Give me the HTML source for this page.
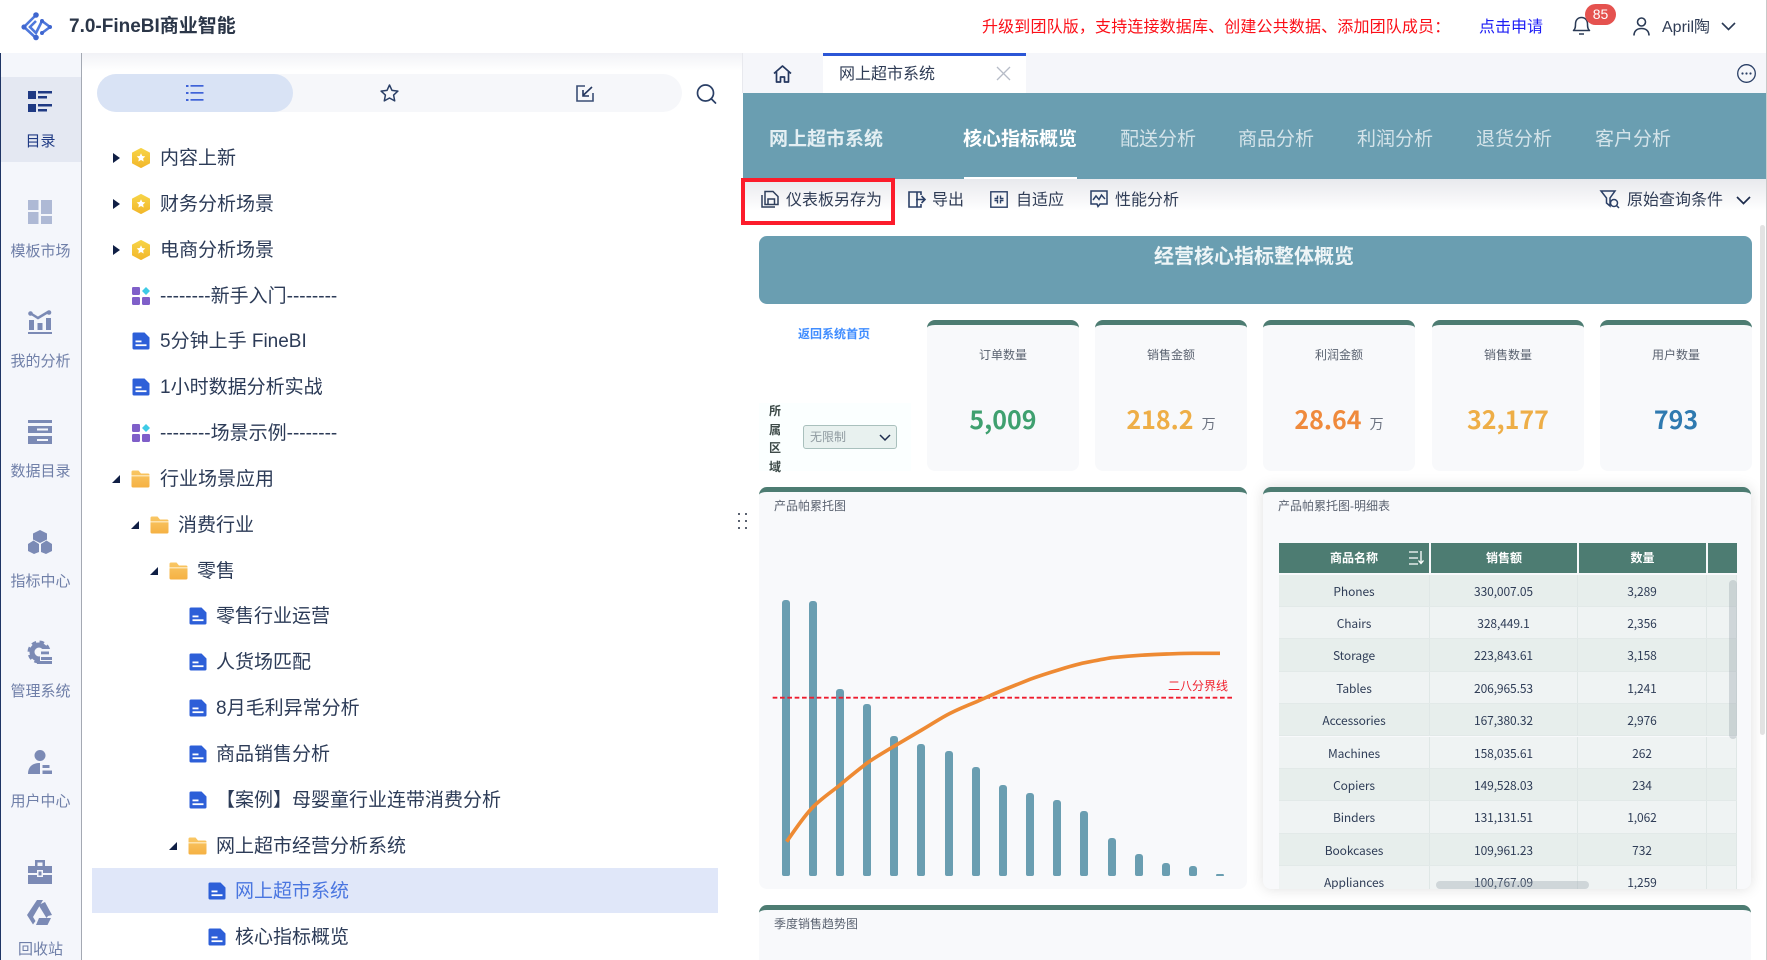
<!DOCTYPE html>
<html lang="zh">
<head>
<meta charset="utf-8">
<title>FineBI</title>
<style>
html,body{margin:0;padding:0;width:1767px;height:960px;overflow:hidden;background:#fff;font-family:"Liberation Sans","Noto Sans CJK SC",sans-serif;color:#2a3a55}
#w{position:relative;width:1767px;height:960px;overflow:hidden}
.a{position:absolute}
.t{position:absolute;white-space:nowrap}
svg{position:absolute;overflow:visible}
.rail{position:absolute;left:0;width:81px;text-align:center;font-size:15px;line-height:20px;color:#6f7fa8;white-space:nowrap;transform:translateY(1px)}
.row{position:absolute;height:28px;line-height:28px;font-size:19px;color:#2c3b57;white-space:nowrap;transform:translateY(1px)}
.nav{position:absolute;top:126px;line-height:28px;font-size:19px;color:#d5e4ea;white-space:nowrap}
.tb{position:absolute;top:189px;line-height:24px;font-size:16px;color:#2f3c55;white-space:nowrap}
.card{position:absolute;background:#f8f9fb;border-radius:8px;border-top:5px solid #4d7c72;box-sizing:border-box}
.kt{position:absolute;left:0;right:0;top:21px;text-align:center;font-size:12px;line-height:18px;color:#5a6270}
.kv{position:absolute;left:0;right:0;top:76px;text-align:center;font-size:25px;line-height:36px;font-weight:700;font-family:"Noto Sans CJK SC",sans-serif}
.kv small{font-size:14px;font-weight:400;color:#6b7280;margin-left:8px}
.ct{position:absolute;font-size:12px;line-height:18px;color:#5a6270;white-space:nowrap}
.bar{position:absolute;width:8px;background:#6a9eb1;border-radius:3px 3px 2px 2px}
.tr{position:absolute;left:0;width:458px;height:32.4px;display:flex;font-size:12px;line-height:33px;color:#2f3d57;text-align:center;border-bottom:1px solid #e2e9e8;box-sizing:border-box;font-family:"Noto Sans CJK SC",sans-serif;letter-spacing:-.1px}
.tr div{box-sizing:border-box;border-right:1px solid #dfe7e6}
.c1{width:151px}.c2{width:148px}.c3{width:129px}.c4{width:30px}
.o{background:#e7eeec}.e{background:#eff3f3}
</style>
</head>
<body>
<div id="w">
<svg width="0" height="0" style="position:absolute">
<defs>
<linearGradient id="gy" x1="0" y1="0" x2="0" y2="1"><stop offset="0" stop-color="#f7d447"/><stop offset="1" stop-color="#f2b72b"/></linearGradient>
<linearGradient id="gf" x1="0" y1="0" x2="0" y2="1"><stop offset="0" stop-color="#f9c765"/><stop offset="1" stop-color="#f5b143"/></linearGradient>
<symbol id="star" viewBox="0 0 18 20"><path d="M9 .5 17.500 5v10L9 19.500.5 15V5z" fill="url(#gy)" stroke="url(#gy)" stroke-linejoin="round" stroke-width="1"/><path d="M9 5.200l1.300 2.800 3 .4-2.200 2.100.6 3L9 12l-2.700 1.500.6-3-2.200-2.100 3-.4z" fill="#fff"/></symbol>
<symbol id="pz" viewBox="0 0 18 18"><rect x="0" y="0" width="8" height="8" rx="1.200" fill="#7f5fc9"/><rect x="0" y="10" width="8" height="8" rx="1.200" fill="#7f5fc9"/><rect x="10" y="10" width="8" height="8" rx="1.200" fill="#7f5fc9"/><path d="M14 0l4 4-4 4-4-4z" fill="#3ecbe6"/></symbol>
<symbol id="file" viewBox="0 0 18 18"><path d="M2 .5h10.500l5 5V16a1.500 1.500 0 0 1-1.500 1.500H2A1.500 1.500 0 0 1 .5 16V2A1.500 1.500 0 0 1 2 .5z" fill="#2d5fd8"/><rect x="3.500" y="8.500" width="6" height="1.800" fill="#fff"/><rect x="3.500" y="12.300" width="11" height="1.800" fill="#fff"/></symbol>
<symbol id="folder" viewBox="0 0 19 18"><path d="M2 .5h5.500l2.500 3h7a1.500 1.500 0 0 1 1.500 1.500v11a1.500 1.500 0 0 1-1.500 1.500H2A1.500 1.500 0 0 1 .5 16V2A1.500 1.500 0 0 1 2 .5z" fill="url(#gf)"/><rect x=".5" y="5" width="18" height="1.500" fill="#fde3ae"/></symbol>
</defs>
</svg>

<!-- top header -->
<div class="a" style="left:0;top:0;width:1767px;height:53px;background:#fff"></div>
<svg style="left:22px;top:12px" width="30" height="29" viewBox="0 0 30 29"><g fill="none" stroke="#4f78dc" stroke-width="2.600"><path d="M14 3 2 15l12 11"/><path d="M14 9 8 15l6 6 6-12 8 6-8 6"/></g><g fill="#3f66cf"><circle cx="14" cy="3" r="2.800"/><circle cx="2" cy="15" r="2.600"/><circle cx="14" cy="25.500" r="2.800"/><circle cx="28" cy="15" r="2"/><circle cx="20" cy="9" r="2"/><circle cx="20" cy="21" r="2"/></g></svg>
<div class="t" style="left:69px;top:13px;font-size:19px;line-height:28px;font-weight:700;color:#2b3648">7.0-FineBI商业智能</div>
<div class="t" style="left:982px;top:16px;font-size:16px;line-height:24px;color:#fb0f18;letter-spacing:.15px">升级到团队版，支持连接数据库、创建公共数据、添加团队成员：</div>
<div class="t" style="left:1479px;top:16px;font-size:16px;line-height:24px;color:#1c1cf5">点击申请</div>
<svg style="left:1572px;top:16px" width="20" height="20" viewBox="0 0 20 20" fill="none" stroke="#2a3a55" stroke-width="1.500"><path d="M1.500 14.500c2-1.500 2-4 2-6.500C3.500 4 6 1.500 9.500 1.500S15.500 4 15.500 8c0 2.500 0 5 2 6.500z" stroke-linejoin="round"/><path d="M7 18h5"/></svg>
<div class="a" style="left:1585px;top:4px;width:31px;height:21px;background:#e5524f;border-radius:11px;color:#fff;font-size:14px;line-height:21px;text-align:center">85</div>
<svg style="left:1633px;top:17px" width="17" height="19" viewBox="0 0 17 19" fill="none" stroke="#2a3a55" stroke-width="1.600"><circle cx="8.500" cy="5" r="4"/><path d="M1 18.500c0-4.500 3-7 7.500-7s7.500 2.500 7.500 7"/></svg>
<div class="t" style="left:1662px;top:16px;font-size:16px;line-height:24px;color:#2f3c55">April陶</div>
<svg style="left:1721px;top:22px" width="15" height="9" viewBox="0 0 15 9" fill="none" stroke="#2a3a55" stroke-width="1.600"><path d="M1 1l6.500 6.500L14 1"/></svg>

<!-- left rail -->
<div class="a" style="left:0;top:53px;width:82px;height:907px;background:#f4f6fb;border-left:1px solid #1f3565;border-right:1px solid #a4a9b3;box-sizing:border-box"></div>
<div class="a" style="left:1px;top:77px;width:80px;height:85px;background:#e4e8f2"></div>

<svg style="left:28px;top:91px" width="24" height="21" viewBox="0 0 24 21" fill="#1f3a84"><rect width="8" height="8"/><rect y="13" width="8" height="8"/><rect x="10" y="0" width="14" height="2.500"/><rect x="10" y="5" width="9" height="2.500"/><rect x="10" y="13" width="14" height="2.500"/><rect x="10" y="18" width="9" height="2.500"/></svg>
<div class="rail" style="top:131px;color:#1f3a84">目录</div>

<svg style="left:28px;top:200px" width="24" height="24" viewBox="0 0 24 24" fill="#aeb9d5"><rect width="10.500" height="10"/><rect y="12" width="10.500" height="12"/><rect x="13" width="11" height="14"/><rect x="13" y="16" width="11" height="8"/></svg>
<div class="rail" style="top:241px">模板市场</div>

<svg style="left:28px;top:310px" width="24" height="24" viewBox="0 0 24 24"><path d="M2 3l8 5 10-6" fill="none" stroke="#7b8ab5" stroke-width="2.500"/><circle cx="2.500" cy="3.500" r="2.300" fill="#7b8ab5"/><circle cx="21" cy="2.500" r="2.300" fill="#7b8ab5"/><g fill="#7b8ab5"><rect x="1" y="10" width="5" height="10"/><rect x="9.500" y="13" width="5" height="7"/><rect x="18" y="8" width="5" height="12"/><rect x="0" y="22" width="24" height="2"/></g></svg>
<div class="rail" style="top:351px">我的分析</div>

<svg style="left:28px;top:420px" width="24" height="24" viewBox="0 0 24 24" fill="#7b8ab5"><rect width="24" height="3"/><path d="M0 6h24v7H0zM9 8.500v2h11v-2zM0 16h24v8H0zM9 19v2h11v-2z" fill-rule="evenodd"/></svg>
<div class="rail" style="top:461px">数据目录</div>

<svg style="left:28px;top:530px" width="24" height="24" viewBox="0 0 24 24" fill="#7b8ab5"><path d="M12 0l7 3.500v6L12 13 5 9.500v-6z"/><path d="M5.500 10.500l5.500 3.500V22l-5 2-6-3v-7z"/><path d="M18.500 10.500l-5.500 3.500V22l5 2 6-3v-7z"/></svg>
<div class="rail" style="top:571px">指标中心</div>

<svg style="left:28px;top:640px" width="24" height="24" viewBox="0 0 24 24"><circle cx="11" cy="12" r="7" fill="none" stroke="#7b8ab5" stroke-width="5"/><circle cx="11" cy="12" r="10" fill="none" stroke="#7b8ab5" stroke-width="3" stroke-dasharray="4.500 3.400"/><rect x="12" y="9" width="14" height="16" fill="#f4f6fb"/><rect x="13" y="11.500" width="8" height="2.800" fill="#7b8ab5"/><rect x="13" y="17" width="11" height="3" fill="#7b8ab5"/><rect x="9" y="21" width="15" height="3" fill="#7b8ab5"/></svg>
<div class="rail" style="top:681px">管理系统</div>

<svg style="left:28px;top:750px" width="24" height="24" viewBox="0 0 24 24" fill="#7b8ab5"><circle cx="12" cy="5.500" r="5.500"/><path d="M0 24c0-7 4-11 12-11v11z"/><rect x="14.500" y="15" width="7" height="3"/><rect x="14.500" y="20.500" width="9.500" height="3.500"/></svg>
<div class="rail" style="top:791px">用户中心</div>

<svg style="left:28px;top:860px" width="24" height="24" viewBox="0 0 24 24" fill="#7b8ab5"><path d="M7 0h10v6h7v7H15v-3H9v3H0V6h7zM9.500 2.500V6h5V2.500z" fill-rule="evenodd"/><path d="M0 15h9v2h6v-2h9v9H0z"/><rect x="10.500" y="11.500" width="3" height="4"/></svg>
<svg style="left:27px;top:900px" width="25" height="25" viewBox="0 0 25 25" fill="#7b8ab5"><path d="M10 0h6L6 17l2.500 4L6 24.500 0 15z"/><path d="M18 2l7 13-4 1-1.500 2-8-13z"/><path d="M12 18h12l-3.500 7H9z"/></svg>
<div class="rail" style="top:939px">回收站</div>

<!-- left panel -->
<div class="a" style="left:82px;top:53px;width:660px;height:18px;background:linear-gradient(#f1f2f6,#fff)"></div>
<div class="a" style="left:97px;top:74px;width:585px;height:38px;background:#f6f7fa;border-radius:19px"></div>
<div class="a" style="left:97px;top:74px;width:196px;height:38px;background:#d9e3f5;border-radius:19px"></div>
<svg style="left:186px;top:85px" width="18" height="16" viewBox="0 0 18 16" fill="#3f63d8"><rect y="0" width="2.500" height="2"/><rect x="4.500" y="0" width="13" height="1.700"/><rect y="7" width="2.500" height="2"/><rect x="4.500" y="7" width="13" height="1.700"/><rect y="14" width="2.500" height="2"/><rect x="4.500" y="14" width="13" height="1.700"/></svg>
<svg style="left:380px;top:84px" width="19" height="18" viewBox="0 0 19 18" fill="none" stroke="#2a3f66" stroke-width="1.500" stroke-linejoin="round"><path d="M9.500 1l2.500 5.400 5.900.7-4.300 4 1.100 5.800-5.200-2.900-5.200 2.900 1.100-5.800-4.300-4 5.900-.7z"/></svg>
<svg style="left:576px;top:85px" width="18" height="17" viewBox="0 0 18 17" fill="none" stroke="#3a4e75" stroke-width="1.600"><path d="M9 1H1v15h16V8"/><path d="M16 2 7 10.500M7 5v6h6" stroke="#24375f"/></svg>
<svg style="left:696px;top:84px" width="21" height="20" viewBox="0 0 21 20" fill="none" stroke="#2a3f66" stroke-width="1.700"><circle cx="9.500" cy="9" r="8"/><path d="M15.500 15l4 4" stroke-linecap="round"/></svg>

<!-- tree -->
<div class="a" style="left:92px;top:868px;width:626px;height:45px;background:#e0e7f9"></div>
<svg style="left:113px;top:153px" width="7" height="10"><path d="M0 0l7 5-7 5z" fill="#101f45"/></svg>
<svg style="left:132px;top:148px" width="18" height="20"><use href="#star"/></svg>
<div class="row" style="left:160px;top:144px">内容上新</div>
<svg style="left:113px;top:199px" width="7" height="10"><path d="M0 0l7 5-7 5z" fill="#101f45"/></svg>
<svg style="left:132px;top:194px" width="18" height="20"><use href="#star"/></svg>
<div class="row" style="left:160px;top:190px">财务分析场景</div>
<svg style="left:113px;top:245px" width="7" height="10"><path d="M0 0l7 5-7 5z" fill="#101f45"/></svg>
<svg style="left:132px;top:240px" width="18" height="20"><use href="#star"/></svg>
<div class="row" style="left:160px;top:236px">电商分析场景</div>
<svg style="left:132px;top:287px" width="18" height="18"><use href="#pz"/></svg>
<div class="row" style="left:160px;top:282px">--------新手入门--------</div>
<svg style="left:132px;top:332px" width="18" height="18"><use href="#file"/></svg>
<div class="row" style="left:160px;top:327px">5分钟上手 FineBI</div>
<svg style="left:132px;top:378px" width="18" height="18"><use href="#file"/></svg>
<div class="row" style="left:160px;top:373px">1小时数据分析实战</div>
<svg style="left:132px;top:424px" width="18" height="18"><use href="#pz"/></svg>
<div class="row" style="left:160px;top:419px">--------场景示例--------</div>

<svg style="left:112px;top:475px" width="8" height="8"><path d="M8 0v8H0z" fill="#101f45"/></svg>
<svg style="left:131px;top:470px" width="19" height="18"><use href="#folder"/></svg>
<div class="row" style="left:160px;top:465px">行业场景应用</div>
<svg style="left:131px;top:521px" width="8" height="8"><path d="M8 0v8H0z" fill="#101f45"/></svg>
<svg style="left:150px;top:516px" width="19" height="18"><use href="#folder"/></svg>
<div class="row" style="left:178px;top:511px">消费行业</div>
<svg style="left:150px;top:567px" width="8" height="8"><path d="M8 0v8H0z" fill="#101f45"/></svg>
<svg style="left:169px;top:562px" width="19" height="18"><use href="#folder"/></svg>
<div class="row" style="left:197px;top:557px">零售</div>

<svg style="left:189px;top:607px" width="18" height="18"><use href="#file"/></svg>
<div class="row" style="left:216px;top:602px">零售行业运营</div>
<svg style="left:189px;top:653px" width="18" height="18"><use href="#file"/></svg>
<div class="row" style="left:216px;top:648px">人货场匹配</div>
<svg style="left:189px;top:699px" width="18" height="18"><use href="#file"/></svg>
<div class="row" style="left:216px;top:694px">8月毛利异常分析</div>
<svg style="left:189px;top:745px" width="18" height="18"><use href="#file"/></svg>
<div class="row" style="left:216px;top:740px">商品销售分析</div>
<svg style="left:189px;top:791px" width="18" height="18"><use href="#file"/></svg>
<div class="row" style="left:216px;top:786px">【案例】母婴童行业连带消费分析</div>

<svg style="left:169px;top:842px" width="8" height="8"><path d="M8 0v8H0z" fill="#101f45"/></svg>
<svg style="left:188px;top:837px" width="19" height="18"><use href="#folder"/></svg>
<div class="row" style="left:216px;top:832px">网上超市经营分析系统</div>
<svg style="left:208px;top:882px" width="18" height="18"><use href="#file"/></svg>
<div class="row" style="left:235px;top:877px;color:#4a76e0">网上超市系统</div>
<svg style="left:208px;top:928px" width="18" height="18"><use href="#file"/></svg>
<div class="row" style="left:235px;top:923px">核心指标概览</div>

<svg style="left:738px;top:513px" width="9" height="18" fill="#5a6270"><rect x="0" y="0" width="2" height="2"/><rect x="7" y="0" width="2" height="2"/><rect x="0" y="7" width="2" height="2"/><rect x="7" y="7" width="2" height="2"/><rect x="0" y="14" width="2" height="2"/><rect x="7" y="14" width="2" height="2"/></svg>

<!-- right: tab bar -->
<div class="a" style="left:742px;top:53px;width:1025px;height:40px;background:#f5f6fa;border-left:1px solid #e8e9ee;box-sizing:border-box"></div>
<svg style="left:773px;top:65px" width="19" height="18" viewBox="0 0 19 18" fill="none" stroke="#24375f" stroke-width="1.700" stroke-linejoin="round"><path d="M1 8.500 9.500 1 18 8.500M3.500 7v10h4v-5h4v5h4V7"/></svg>
<div class="a" style="left:823px;top:53px;width:203px;height:40px;background:#fff;border-top:3px solid #2b56d6;box-sizing:border-box"></div>
<div class="t" style="left:839px;top:63px;font-size:16px;line-height:24px;color:#2f3c55">网上超市系统</div>
<svg style="left:997px;top:67px" width="13" height="13" fill="none" stroke="#b6bcc7" stroke-width="1.300"><path d="M0 0l13 13M13 0 0 13"/></svg>
<svg style="left:1737px;top:64px" width="19" height="19" viewBox="0 0 19 19" fill="none" stroke="#2a3f66" stroke-width="1.300"><circle cx="9.500" cy="9.500" r="8.800"/><g fill="#2a3f66" stroke="none"><circle cx="5.500" cy="9.500" r="1.100"/><circle cx="9.500" cy="9.500" r="1.100"/><circle cx="13.500" cy="9.500" r="1.100"/></g></svg>

<!-- teal nav -->
<div class="a" style="left:743px;top:93px;width:1024px;height:86px;background:#6a9eb1"></div>
<div class="nav" style="left:769px;font-weight:700;color:#e4eff3">网上超市系统</div>
<div class="nav" style="left:963px;font-weight:700;color:#fff">核心指标概览</div>
<div class="a" style="left:964px;top:177px;width:113px;height:3px;background:#fff"></div>
<div class="nav" style="left:1120px">配送分析</div>
<div class="nav" style="left:1238px">商品分析</div>
<div class="nav" style="left:1357px">利润分析</div>
<div class="nav" style="left:1476px">退货分析</div>
<div class="nav" style="left:1595px">客户分析</div>

<!-- toolbar -->
<div class="a" style="left:743px;top:179px;width:1024px;height:32px;background:linear-gradient(#e8e9ed,#fff)"></div>
<div class="a" style="left:741px;top:178px;width:154px;height:47px;border:4px solid #fc1c2b;box-sizing:border-box"></div>
<svg style="left:761px;top:190px" width="18" height="18" viewBox="0 0 18 18" fill="none" stroke="#2f3f5c" stroke-width="1.500"><path d="M1 5v12h13"/><path d="M4 1.500h8l5 5v8H4z"/><path d="M7 14.500V9h6.500v5.500"/></svg>
<div class="tb" style="left:786px">仪表板另存为</div>
<svg style="left:908px;top:191px" width="18" height="17" viewBox="0 0 18 17" fill="none" stroke="#2a3f66" stroke-width="1.600"><path d="M9 1H1v15h8zM9 1h4v3M13 13v3H9M8 8.500h9M13.500 5l3.500 3.500-3.500 3.500"/></svg>
<div class="tb" style="left:932px">导出</div>
<svg style="left:990px;top:191px" width="18" height="17" viewBox="0 0 18 17" fill="none" stroke="#2a3f66" stroke-width="1.400"><rect x=".8" y=".8" width="16.400" height="15.400"/><path d="M7.500 4.500v3h-3M10.500 4.500v3h3M7.500 12.500v-3h-3M10.500 12.500v-3h3"/></svg>
<div class="tb" style="left:1016px">自适应</div>
<svg style="left:1090px;top:190px" width="18" height="18" viewBox="0 0 18 18" fill="none" stroke="#2a3f66" stroke-width="1.500"><path d="M7 14H1V1h16v13h-7l-2 2.500z"/><path d="M3 10l3-4 3 3.500L11.500 5 15 9"/></svg>
<div class="tb" style="left:1115px">性能分析</div>
<svg style="left:1600px;top:190px" width="20" height="19" viewBox="0 0 20 19" fill="none" stroke="#2a3f66" stroke-width="1.500"><path d="M1 1h14l-5 7v8L6.500 13V8z"/><circle cx="14" cy="13" r="3.500"/><path d="M16.500 15.500l2.500 2.500"/></svg>
<div class="tb" style="left:1627px">原始查询条件</div>
<svg style="left:1736px;top:196px" width="15" height="9" fill="none" stroke="#1d2c4d" stroke-width="1.700"><path d="M1 1l6.500 6.500L14 1"/></svg>

<!-- scroll bar -->
<div class="a" style="left:1760px;top:225px;width:5px;height:510px;background:#e3e3e3;border-radius:3px"></div>
<div class="a" style="left:1766px;top:0;width:1px;height:960px;background:#c9c9c9"></div>

<!-- title -->
<div class="a" style="left:759px;top:236px;width:993px;height:68px;background:#6a9eb1;border-radius:8px"></div>
<div class="t" style="left:1154px;top:242px;font-size:20px;line-height:30px;font-weight:700;color:#eef5f7">经营核心指标整体概览</div>

<!-- filter -->
<div class="t" style="left:798px;top:325px;font-size:12px;line-height:18px;font-weight:700;color:#3f8cff">返回系统首页</div>
<div class="a" style="left:759px;top:403px;width:152px;height:68px;background:#fbffff"></div>
<div class="a" style="left:769px;top:402px;width:12px;font-size:12px;line-height:18.500px;font-weight:700;color:#3d4a48;text-align:center">所<br>属<br>区<br>域</div>
<div class="a" style="left:803px;top:425px;width:94px;height:24px;background:#e8f1ef;border:1px solid #a9c0bd;border-radius:3px;box-sizing:border-box"></div>
<div class="t" style="left:810px;top:428px;font-size:12px;line-height:18px;color:#8f9aa0">无限制</div>
<svg style="left:879px;top:434px" width="12" height="7" fill="none" stroke="#1d2c4d" stroke-width="1.500"><path d="M1 1l5 5 5-5"/></svg>

<!-- KPI cards -->
<div class="card" style="left:927px;top:320px;width:152px;height:151px"><div class="kt">订单数量</div><div class="kv" style="color:#3fa06f">5,009</div></div>
<div class="card" style="left:1095px;top:320px;width:152px;height:151px"><div class="kt">销售金额</div><div class="kv" style="color:#eeae47">218.2<small>万</small></div></div>
<div class="card" style="left:1263px;top:320px;width:152px;height:151px"><div class="kt">利润金额</div><div class="kv" style="color:#ef8a3c">28.64<small>万</small></div></div>
<div class="card" style="left:1432px;top:320px;width:152px;height:151px"><div class="kt">销售数量</div><div class="kv" style="color:#eeae47">32,177</div></div>
<div class="card" style="left:1600px;top:320px;width:152px;height:151px"><div class="kt">用户数量</div><div class="kv" style="color:#2f7ab0">793</div></div>

<!-- pareto card -->
<div class="card" style="left:759px;top:487px;width:488px;height:402px"></div>
<div class="ct" style="left:774px;top:497px">产品帕累托图</div>
<div class="bar" style="left:782px;top:600px;height:276px"></div>
<div class="bar" style="left:809px;top:601px;height:275px"></div>
<div class="bar" style="left:836px;top:689px;height:187px"></div>
<div class="bar" style="left:863px;top:704px;height:172px"></div>
<div class="bar" style="left:890px;top:736px;height:140px"></div>
<div class="bar" style="left:917px;top:744px;height:132px"></div>
<div class="bar" style="left:945px;top:751px;height:125px"></div>
<div class="bar" style="left:972px;top:767px;height:109px"></div>
<div class="bar" style="left:999px;top:785px;height:91px"></div>
<div class="bar" style="left:1026px;top:793px;height:83px"></div>
<div class="bar" style="left:1053px;top:800px;height:76px"></div>
<div class="bar" style="left:1080px;top:811px;height:65px"></div>
<div class="bar" style="left:1108px;top:838px;height:38px"></div>
<div class="bar" style="left:1135px;top:854px;height:22px"></div>
<div class="bar" style="left:1162px;top:863px;height:13px"></div>
<div class="bar" style="left:1189px;top:866px;height:10px"></div>
<div class="bar" style="left:1216px;top:874px;height:2px"></div>
<svg style="left:750px;top:480px" width="520" height="480" viewBox="0 0 1560 1440">
<path d="M68 653H1454" stroke="#ee1c2e" stroke-width="5.500" stroke-dasharray="14 8" fill="none"/>
<path d="M110 1085C135 1050 160 1010 190 980C215 955 245 935 270 915C295 893 325 870 350 850C375 832 405 815 430 800L515 750C545 733 570 715 600 700C630 685 650 677 680 665C710 652 730 642 760 630L840 598C870 587 895 579 925 570C950 562 980 553 1005 548C1030 543 1060 537 1085 533C1115 530 1140 528 1170 526C1200 524 1220 523 1250 522C1280 521 1300 520 1330 520H1410" fill="none" stroke="#ee8a33" stroke-width="11"/>
</svg>
<div class="t" style="left:1168px;top:677px;font-size:12px;line-height:18px;color:#f0222f">二八分界线</div>

<!-- detail card -->
<div class="card" style="left:1263px;top:487px;width:488px;height:402px;background:#f8f9fb;box-shadow:0 0 14px rgba(0,0,0,.13)"></div>
<div class="ct" style="left:1278px;top:497px">产品帕累托图-明细表</div>
<div class="a" style="left:1279px;top:543px;width:458px;height:346px;overflow:hidden">
 <div class="a" style="left:0;top:0;width:150px;height:30px;background:#4d7c72;color:#fff;font-weight:700;font-size:12px;line-height:31px;text-align:center">商品名称</div>
 <svg style="left:130px;top:8px" width="15" height="14" fill="none" stroke="#fff" stroke-width="1.300"><path d="M0 1h9M0 7h9M0 13h9M12 0v12M9.500 9.500l2.500 3 2.500-3"/></svg>
 <div class="a" style="left:152px;top:0;width:146px;height:30px;background:#4d7c72;color:#fff;font-weight:700;font-size:12px;line-height:31px;text-align:center">销售额</div>
 <div class="a" style="left:300px;top:0;width:127px;height:30px;background:#4d7c72;color:#fff;font-weight:700;font-size:12px;line-height:31px;text-align:center">数量</div>
 <div class="a" style="left:429px;top:0;width:29px;height:30px;background:#4d7c72"></div>
 <div class="tr o" style="top:31.500px"><div class="c1">Phones</div><div class="c2">330,007.05</div><div class="c3">3,289</div><div class="c4"></div></div>
 <div class="tr e" style="top:63.900px"><div class="c1">Chairs</div><div class="c2">328,449.1</div><div class="c3">2,356</div><div class="c4"></div></div>
 <div class="tr o" style="top:96.300px"><div class="c1">Storage</div><div class="c2">223,843.61</div><div class="c3">3,158</div><div class="c4"></div></div>
 <div class="tr e" style="top:128.700px"><div class="c1">Tables</div><div class="c2">206,965.53</div><div class="c3">1,241</div><div class="c4"></div></div>
 <div class="tr o" style="top:161.100px"><div class="c1">Accessories</div><div class="c2">167,380.32</div><div class="c3">2,976</div><div class="c4"></div></div>
 <div class="tr e" style="top:193.500px"><div class="c1">Machines</div><div class="c2">158,035.61</div><div class="c3">262</div><div class="c4"></div></div>
 <div class="tr o" style="top:225.900px"><div class="c1">Copiers</div><div class="c2">149,528.03</div><div class="c3">234</div><div class="c4"></div></div>
 <div class="tr e" style="top:258.300px"><div class="c1">Binders</div><div class="c2">131,131.51</div><div class="c3">1,062</div><div class="c4"></div></div>
 <div class="tr o" style="top:290.700px"><div class="c1">Bookcases</div><div class="c2">109,961.23</div><div class="c3">732</div><div class="c4"></div></div>
 <div class="tr e" style="top:323.100px"><div class="c1">Appliances</div><div class="c2">100,767.09</div><div class="c3">1,259</div><div class="c4"></div></div>
 <div class="a" style="left:450px;top:37px;width:8px;height:159px;background:rgba(150,160,170,.35);border-radius:4px"></div>
 <div class="a" style="left:157px;top:338px;width:153px;height:8px;background:rgba(150,160,170,.35);border-radius:4px"></div>
</div>

<!-- bottom card -->
<div class="card" style="left:759px;top:905px;width:992px;height:55px;border-radius:8px 8px 0 0"></div>
<div class="ct" style="left:774px;top:915px">季度销售趋势图</div>
</div>
</body>
</html>
